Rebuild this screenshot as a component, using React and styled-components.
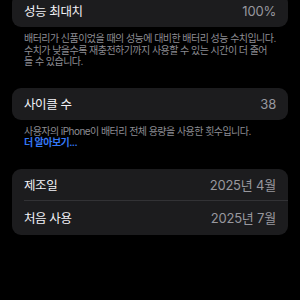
import React from 'react';
import styled, {createGlobalStyle} from "styled-components";

const GlobalStyle = createGlobalStyle`
  html, body {
    margin: 0;
    padding: 0;
    background: #000;
    overflow: hidden;
  }
  body {
    font-family: "Inter", "Noto Sans CJK KR", sans-serif;
    -webkit-font-smoothing: antialiased;
  }
`

const Page = styled.div`
  width: 300px;
  height: 300px;
  background: #000;
  padding: 0 12px;
  box-sizing: border-box;
  display: flex;
  flex-direction: column;
`

const Group = styled.div`
  background: #1c1c1e;
  border-radius: 9px;
  margin-top: ${props => props.$top || 0}px;
  overflow: hidden;
`

const Row = styled.div`
  height: ${props => props.$h || 33}px;
  display: flex;
  align-items: center;
  justify-content: space-between;
  padding: 0 12px;
  position: relative;
  &:not(:last-child)::after{
    content: '';
    position: absolute;
    left: 12px;
    right: 0;
    bottom: 0;
    height: 1px;
    background: #323235;
  }
`

const Label = styled.span`
  color: #f2f2f7;
  font-size: 12.5px;
  letter-spacing: -0.4px;
`

const Value = styled.span`
  color: #98989e;
  font-size: 13px;
  letter-spacing: -0.2px;
`

const Footer = styled.p`
  margin: 0;
  padding: 6px 8px 0 12px;
  color: #8d8d93;
  font-size: 10px;
  line-height: 11.5px;
  letter-spacing: -0.55px;
  white-space: nowrap;
`

const Link = styled.a`
  display: block;
  color: #3478f6;
  font-weight: 600;
  text-decoration: none;
`

const BatteryInfo = () => {
    return (
        <Page>
            <GlobalStyle/>
            <Group $top={-6}>
                <Row $h={33}>
                    <Label>성능 최대치</Label>
                    <Value>100%</Value>
                </Row>
            </Group>
            <Footer>
                배터리가 신품이었을 때의 성능에 대비한 배터리 성능 수치입니다.<br/>
                수치가 낮을수록 재충전하기까지 사용할 수 있는 시간이 더 줄어<br/>
                들 수 있습니다.
            </Footer>
            <Group $top={20}>
                <Row $h={32}>
                    <Label>사이클 수</Label>
                    <Value>38</Value>
                </Row>
            </Group>
            <Footer>
                사용자의 iPhone이 배터리 전체 용량을 사용한 횟수입니다.
                <Link href='#'>더 알아보기...</Link>
            </Footer>
            <Group $top={20}>
                <Row $h={32}>
                    <Label>제조일</Label>
                    <Value>2025년 4월</Value>
                </Row>
                <Row $h={34}>
                    <Label>처음 사용</Label>
                    <Value>2025년 7월</Value>
                </Row>
            </Group>
        </Page>
    );
};

export default BatteryInfo;
